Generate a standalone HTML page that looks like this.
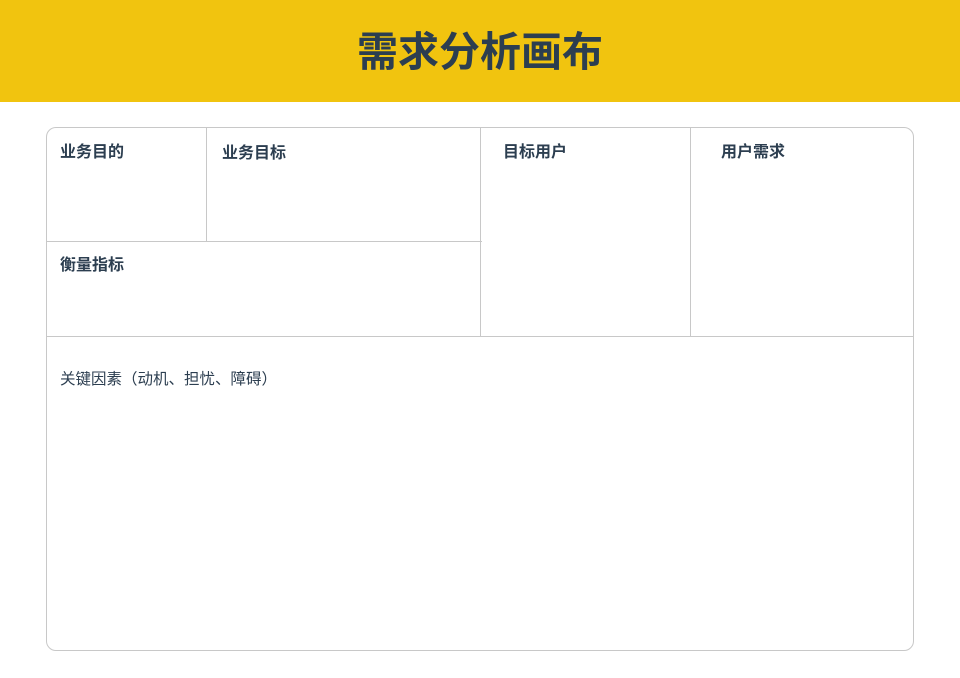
<!DOCTYPE html>
<html><head><meta charset="utf-8"><style>
body{margin:0;width:960px;height:678px;background:#fff;font-family:"Liberation Sans","Noto Sans CJK SC",sans-serif;position:relative;overflow:hidden}
.hd{position:absolute;left:0;top:0;width:960px;height:102px;background:#F1C40F}
.hd h1{margin:0;text-align:center;line-height:104px;font-size:41px;font-weight:bold;color:#2c3e50}
.box{position:absolute;left:46px;top:127px;width:866px;height:522px;border:1px solid #c8c8c8;border-radius:10px}
.l{position:absolute;background:#c8c8c8}
.t{position:absolute;font-size:16px;font-weight:bold;color:#2c3e50;line-height:20px}
</style></head><body>
<div class="hd"><h1>需求分析画布</h1></div>
<div class="box"></div>
<div class="l" style="left:206px;top:128px;width:1px;height:113px"></div>
<div class="l" style="left:47px;top:241px;width:435px;height:1px"></div>
<div class="l" style="left:480px;top:128px;width:1px;height:208px"></div>
<div class="l" style="left:690px;top:128px;width:1px;height:208px"></div>
<div class="l" style="left:47px;top:336px;width:866px;height:1px"></div>
<div class="t" style="left:60px;top:143px">业务目的</div>
<div class="t" style="left:222px;top:144px">业务目标</div>
<div class="t" style="left:503px;top:143px">目标用户</div>
<div class="t" style="left:721px;top:143px">用户需求</div>
<div class="t" style="left:60px;top:256px">衡量指标</div>
<div class="t" style="left:60px;top:370px;font-weight:normal;font-size:15.5px">关键因素（动机、担忧、障碍）</div>
</body></html>
